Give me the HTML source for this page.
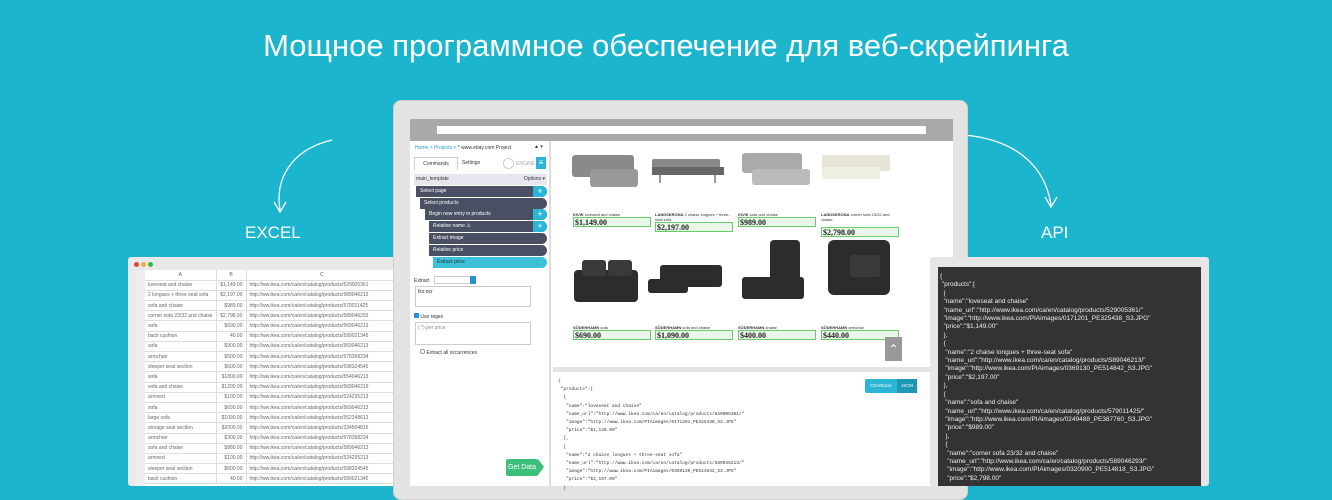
<!DOCTYPE html>
<html><head><meta charset="utf-8"><style>
*{margin:0;padding:0;box-sizing:border-box}
body{width:1332px;height:486px;overflow:hidden;background:#1bb6cd;font-family:"Liberation Sans",sans-serif;position:relative}
.a{position:absolute}
h1{position:absolute;left:0;width:1332px;top:28px;text-align:center;color:#fff;font-weight:normal;font-size:31px}
.lbl{color:#fff;font-size:17px}
.sheet td{border-bottom:1px solid #ddd;border-right:1px solid #ddd;font-size:5px;color:#666;height:10.2px;padding:0 3px;white-space:nowrap}
.row{position:absolute;height:11px;background:#4a4f63;color:#fff;font-size:5px;line-height:11px;padding-left:4px;border-radius:0 6px 6px 0}
.plus{position:absolute;right:0;top:0;width:14px;height:11px;background:#2bb5d6;color:#fff;text-align:center;font-size:9px;line-height:11px;border-radius:0 6px 6px 0}
.prod{position:absolute;width:78px;font-size:4px;color:#333}
.price{border:1px solid #6c6;background:#e8f7e8;font:bold 8px "Liberation Serif",serif;color:#222;height:10px;line-height:9px;padding-left:1px}
.code{font:4.5px "Liberation Mono",monospace;color:#333;line-height:8.2px;white-space:pre}
.api{font-size:6.5px;color:#eee;line-height:8.4px;white-space:pre}
</style></head><body>
<h1>Мощное программное обеспечение для веб-скрейпинга</h1>

<svg class="a" style="left:260px;top:130px" width="90" height="95"><path d="M72 10 C30 20 15 50 20 80" stroke="#fff" stroke-width="1.3" fill="none"/><path d="M14 72 L20 82 L26 72" stroke="#fff" stroke-width="1.3" fill="none"/></svg>
<div class="a lbl" style="left:245px;top:223px">EXCEL</div>
<svg class="a" style="left:955px;top:125px" width="110" height="95"><path d="M10 10 C60 15 90 40 96 80" stroke="#fff" stroke-width="1.3" fill="none"/><path d="M90 72 L96 82 L102 72" stroke="#fff" stroke-width="1.3" fill="none"/></svg>
<div class="a lbl" style="left:1041px;top:223px">API</div>

<!-- spreadsheet -->
<div class="a" style="left:128px;top:257px;width:270px;height:229px;background:#e9e9e9;border-radius:3px">
 <div class="a" style="left:6px;top:5px;width:5px;height:5px;border-radius:50%;background:#e0443a"></div>
 <div class="a" style="left:13px;top:5px;width:5px;height:5px;border-radius:50%;background:#e7b43a"></div>
 <div class="a" style="left:20px;top:5px;width:5px;height:5px;border-radius:50%;background:#3ab54a"></div>
 <div class="a" style="left:8px;top:13px;width:262px;height:216px;background:#fff;border-left:9px solid #eee">
 <table class="sheet" style="border-collapse:collapse;width:100%">
 <tr><td style="text-align:center;width:70px">A</td><td style="text-align:center;width:30px">B</td><td style="text-align:center">C</td></tr>
 <tr><td>loveseat and chaise</td><td align=right>$1,149.00</td><td>http://ww.ikea.com/ca/en/catalog/products/529005361</td></tr>
 <tr><td>2 longues + three seat sofa</td><td align=right>$2,197.00</td><td>http://ww.ikea.com/ca/en/catalog/products/589046213</td></tr>
 <tr><td>sofa and chaise</td><td align=right>$989.00</td><td>http://ww.ikea.com/ca/en/catalog/products/579011425</td></tr>
 <tr><td>corner sofa 23/32 and chaise</td><td align=right>$2,798.00</td><td>http://ww.ikea.com/ca/en/catalog/products/589046293</td></tr>
 <tr><td>sofa</td><td align=right>$690.00</td><td>http://ww.ikea.com/ca/en/catalog/products/569046213</td></tr>
 <tr><td>back cushion</td><td align=right>40.00</td><td>http://ww.ikea.com/ca/en/catalog/products/599021345</td></tr>
 <tr><td>sofa</td><td align=right>$900.00</td><td>http://ww.ikea.com/ca/en/catalog/products/569046213</td></tr>
 <tr><td>armchair</td><td align=right>$500.00</td><td>http://ww.ikea.com/ca/en/catalog/products/578398234</td></tr>
 <tr><td>sleeper seat section</td><td align=right>$600.00</td><td>http://ww.ikea.com/ca/en/catalog/products/598324545</td></tr>
 <tr><td>sofa</td><td align=right>$1800.00</td><td>http://ww.ikea.com/ca/en/catalog/products/554046213</td></tr>
 <tr><td>sofa and chaise</td><td align=right>$1200.00</td><td>http://ww.ikea.com/ca/en/catalog/products/569046219</td></tr>
 <tr><td>armrest</td><td align=right>$100.00</td><td>http://ww.ikea.com/ca/en/catalog/products/524235213</td></tr>
 <tr><td>sofa</td><td align=right>$690.00</td><td>http://ww.ikea.com/ca/en/catalog/products/569046213</td></tr>
 <tr><td>large sofa</td><td align=right>$1090.00</td><td>http://ww.ikea.com/ca/en/catalog/products/552348613</td></tr>
 <tr><td>storage seat section</td><td align=right>$2000.00</td><td>http://ww.ikea.com/ca/en/catalog/products/234504815</td></tr>
 <tr><td>armchair</td><td align=right>$300.00</td><td>http://ww.ikea.com/ca/en/catalog/products/578398234</td></tr>
 <tr><td>sofa and chaise</td><td align=right>$880.00</td><td>http://ww.ikea.com/ca/en/catalog/products/589046213</td></tr>
 <tr><td>armrest</td><td align=right>$100.00</td><td>http://ww.ikea.com/ca/en/catalog/products/524235213</td></tr>
 <tr><td>sleeper seat section</td><td align=right>$600.00</td><td>http://ww.ikea.com/ca/en/catalog/products/598324545</td></tr>
 <tr><td>back cushion</td><td align=right>40.00</td><td>http://ww.ikea.com/ca/en/catalog/products/599021345</td></tr>
 </table></div>
</div>

<!-- monitor -->
<div class="a" style="left:393px;top:100px;width:575px;height:400px;background:#e3e3e3;border-radius:8px;border:1px solid #d0d0d0"></div>
<div class="a" style="left:410px;top:119px;width:543px;height:22px;background:#a9a9a9"></div>
<div class="a" style="left:437px;top:126px;width:489px;height:8px;background:#fff"></div>
<div class="a" style="left:410px;top:141px;width:543px;height:345px;background:#fff"></div>

<!-- left panel -->
<div class="a" style="left:410px;top:141px;width:141px;height:345px;border-right:2px solid #ddd;font-size:5px;color:#333">
 <div class="a" style="left:5px;top:4px;color:#2b9fd0">Home &gt; Projects &gt; <span style="color:#333">* www.ebay.com Project</span></div>
 <div class="a" style="left:124px;top:3px">▲ ▾</div>
 <div class="a" style="left:4px;top:16px;width:44px;height:13px;border:1px solid #ccc;border-bottom:none;background:#fff;text-align:center;line-height:12px">Commands</div>
 <div class="a" style="left:52px;top:19px">Settings</div>
 <div class="a" style="left:93px;top:17px;width:11px;height:11px;border:1px solid #ccc;border-radius:50%"></div>
 <div class="a" style="left:106px;top:20px;color:#aaa">ENGINE</div>
 <div class="a" style="left:126px;top:16px;width:10px;height:12px;background:#2bb5d6;color:#fff;text-align:center;line-height:12px;font-size:8px">≡</div>
 <div class="a" style="left:4px;top:33px;width:133px;height:11px;background:#e6e7ee;line-height:11px;padding-left:2px">main_template<span style="float:right;padding-right:2px">Options ▾</span></div>
 <div class="row" style="left:6px;top:45px;width:131px">Select page<div class="plus">+</div></div>
 <div class="row" style="left:10px;top:57px;width:127px">Select products</div>
 <div class="row" style="left:15px;top:68px;width:122px">Begin new entry in products<div class="plus">+</div></div>
 <div class="row" style="left:19px;top:80px;width:118px">Relative name ⚠<div class="plus">+</div></div>
 <div class="row" style="left:19px;top:92px;width:118px">Extract image</div>
 <div class="row" style="left:19px;top:104px;width:118px">Relative price</div>
 <div class="row" style="left:23px;top:116px;width:114px;background:#3cc1d8;color:#234">Extract price</div>
 <div class="a" style="left:4px;top:137px">Extract</div>
 <div class="a" style="left:24px;top:135px;width:42px;height:8px;border:1px solid #ccc"></div><div class="a" style="left:60px;top:135px;width:6px;height:8px;background:#2b8fd6"></div>
 <div class="a" style="left:5px;top:145px;width:116px;height:21px;border:1px solid #ccc;padding:2px">Ikx:ocr</div>
 <div class="a" style="left:4px;top:172px"><span style="display:inline-block;width:5px;height:5px;background:#2b8fd6"></span> Use regex</div>
 <div class="a" style="left:5px;top:181px;width:116px;height:23px;border:1px solid #ccc;padding:2px;color:#888">(.*) per price</div>
 <div class="a" style="left:10px;top:208px"><span style="display:inline-block;width:5px;height:5px;border:1px solid #999;border-radius:2px"></span> Extract all occurrences</div>
 <div class="a" style="left:96px;top:318px;width:32px;height:17px;background:#3cbf7a;color:#fff;font-size:7px;line-height:17px;text-align:center;border-radius:2px">Get Data</div>
 <div class="a" style="left:128px;top:318px;width:0;height:0;border-top:8.5px solid transparent;border-bottom:8.5px solid transparent;border-left:6px solid #3cbf7a"></div>
</div>

<!-- products -->
<svg class="a" style="left:560px;top:145px" width="330" height="190">
 <g fill="#8a8a8a"><rect x="12" y="10" width="62" height="22" rx="3"/><rect x="30" y="24" width="48" height="18" rx="3" fill="#999"/></g>
 <g fill="#555"><rect x="92" y="14" width="68" height="12" rx="2" fill="#888"/><rect x="92" y="22" width="72" height="8" fill="#666"/><line x1="100" y1="30" x2="100" y2="38" stroke="#333"/><line x1="155" y1="30" x2="155" y2="38" stroke="#333"/></g>
 <g><rect x="182" y="8" width="60" height="20" rx="3" fill="#aaa"/><rect x="192" y="24" width="58" height="16" rx="3" fill="#bbb"/></g>
 <g><rect x="262" y="10" width="68" height="16" rx="2" fill="#e6e4d6"/><rect x="262" y="22" width="58" height="12" fill="#efefe2"/></g>
 <g fill="#2c2c2e"><rect x="14" y="125" width="64" height="32" rx="4"/><rect x="22" y="115" width="24" height="16" rx="3" fill="#3a3a3c"/><rect x="48" y="115" width="24" height="16" rx="3" fill="#3a3a3c"/></g>
 <g fill="#2c2c2e"><rect x="100" y="120" width="62" height="22" rx="3"/><rect x="88" y="134" width="40" height="14" rx="3"/></g>
 <g fill="#2c2c2e"><rect x="210" y="95" width="30" height="50" rx="4"/><rect x="182" y="132" width="62" height="22" rx="3"/></g>
 <g fill="#2c2c2e"><rect x="268" y="95" width="62" height="55" rx="6"/><rect x="290" y="110" width="30" height="22" rx="3" fill="#3a3a3c"/></g>
</svg>
<div class="prod" style="left:573px;top:212px"><b>KIVIK</b> loveseat and chaise<div class="price">$1,149.00</div></div>
<div class="prod" style="left:655px;top:212px"><b>LANDSKRONA</b> 2 chaise longues + three-seat sofa<div class="price">$2,197.00</div></div>
<div class="prod" style="left:738px;top:212px"><b>KIVIK</b> sofa and chaise<div class="price">$989.00</div></div>
<div class="prod" style="left:821px;top:212px"><b>LANDSKRONA</b> corner sofa 23/32 and chaise<div class="price" style="margin-top:5px">$2,798.00</div></div>
<div class="prod" style="left:573px;top:325px"><b>SÖDERHAMN</b> sofa<div class="price">$690.00</div></div>
<div class="prod" style="left:655px;top:325px"><b>SÖDERHAMN</b> sofa and chaise<div class="price">$1,090.00</div></div>
<div class="prod" style="left:738px;top:325px"><b>SÖDERHAMN</b> chaise<div class="price">$400.00</div></div>
<div class="prod" style="left:821px;top:325px"><b>SÖDERHAMN</b> armchair<div class="price">$440.00</div></div>
<div class="a" style="left:885px;top:337px;width:17px;height:24px;background:#999;color:#fff;text-align:center;font-size:12px;line-height:24px">⌃</div>
<div class="a" style="left:553px;top:367px;width:400px;height:5px;background:#e4e4e4"></div>
<div class="a" style="left:865px;top:379px;width:52px;height:14px;background:#2bb5d6;border-radius:2px;font-size:4.5px;color:#fff;line-height:14px"><span style="padding-left:5px">CSV/Excel</span><span style="position:absolute;right:0;width:20px;height:14px;background:#1e97b6;text-align:center">JSON</span></div>
<div class="a code" style="left:558px;top:378px">{
 "products":[
  {
   "name":"loveseat and chaise"
   "name_url":"http://www.ikea.com/ca/en/catalog/products/529005361/"
   "image":"http://www.ikea.com/PIAimages/0171201_PE325438_S3.JPG"
   "price":"$1,149.00"
  },
  {
   "name":"2 chaise longues + three-seat sofa"
   "name_url":"http://www.ikea.com/ca/en/catalog/products/S89046213/"
   "image":"http://www.ikea.com/PIAimages/0369130_PE514842_S3.JPG"
   "price":"$2,197.00"
  }</div>

<!-- API panel (in front of monitor) -->
<div class="a" style="left:930px;top:257px;width:279px;height:229px;background:#e6e6e6;border-radius:3px">
 <div class="a api" style="left:8px;top:10px;width:263px;height:219px;background:#333;padding:6px 2px">{
 "products":[
  {
  "name":"loveseat and chaise"
  "name_url":"http://www.ikea.com/ca/en/catalog/products/529005361/"
  "image":"http://www.ikea.com/PIAimages/0171201_PE325438_S3.JPG"
  "price":"$1,149.00"
  },
  {
   "name":"2 chaise longues + three-seat sofa"
   "name_url":"http://www.ikea.com/ca/en/catalog/products/S89046213/"
   "image":"http://www.ikea.com/PIAimages/0369130_PE514842_S3.JPG"
   "price":"$2,197.00"
  },
  {
   "name":"sofa and chaise"
   "name_url":"http://www.ikea.com/ca/en/catalog/products/579011425/"
   "image":"http://www.ikea.com/PIAimages/0249488_PE387760_S3.JPG"
   "price":"$989.00"
   },
   {
    "name":"corner sofa 23/32 and chaise"
    "name_url":"http://www.ikea.com/ca/en/catalog/products/589046293/"
    "image":"http://www.ikea.com/PIAimages/0320900_PE514818_S3.JPG"
    "price":"$2,798.00"</div>
</div>
</body></html>
